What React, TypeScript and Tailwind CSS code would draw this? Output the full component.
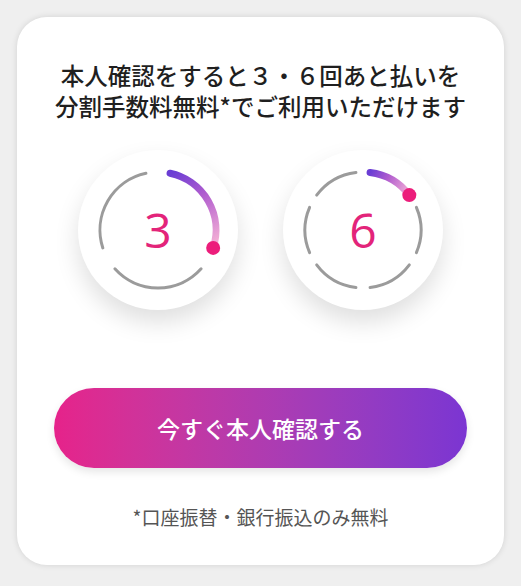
import React from 'react';

const JP = { fontFamily: '"Noto Sans CJK JP", "Noto Sans", sans-serif' };

// point on a ring, angle measured clockwise from 12 o'clock
function pt(cx: number, cy: number, r: number, deg: number) {
  const a = (deg * Math.PI) / 180;
  return { x: cx + r * Math.sin(a), y: cy - r * Math.cos(a) };
}

function arc(cx: number, cy: number, r: number, from: number, to: number) {
  const s = pt(cx, cy, r, from);
  const e = pt(cx, cy, r, to);
  const large = to - from > 180 ? 1 : 0;
  return `M ${s.x} ${s.y} A ${r} ${r} 0 ${large} 1 ${e.x} ${e.y}`;
}

function Dial({ count, id }: { count: number; id: string }) {
  const step = 360 / count;
  const gap = count === 3 ? 12 : 7;
  const segs = Array.from({ length: count }, (_, i) => ({
    from: i * step + gap,
    to: (i + 1) * step - gap,
  }));
  const c = 80;
  const r = 58;
  const first = segs[0];
  const s = pt(c, c, r, first.from);
  const e = pt(c, c, r, first.to);

  return (
    <div className="relative w-[160px] h-[160px] rounded-full bg-white shadow-[0_12px_24px_rgba(0,0,0,0.13)]">
      <svg width="160" height="160" viewBox="0 0 160 160" className="absolute inset-0">
        <defs>
          <linearGradient id={id} gradientUnits="userSpaceOnUse" x1={s.x} y1={s.y} x2={e.x} y2={e.y}>
            <stop offset="0" stopColor="#6a3dd4" />
            <stop offset="0.4" stopColor="#b05ccf" />
            <stop offset="1" stopColor="#f8b4d6" />
          </linearGradient>
        </defs>
        {segs.slice(1).map((sg, i) => (
          <path
            key={i}
            d={arc(c, c, r, sg.from, sg.to)}
            fill="none"
            stroke="#9b9b9b"
            strokeWidth="3"
            strokeLinecap="round"
          />
        ))}
        <path
          d={arc(c, c, r, first.from, first.to)}
          fill="none"
          stroke={`url(#${id})`}
          strokeWidth="7"
          strokeLinecap="round"
        />
        <circle cx={e.x} cy={e.y} r="7" fill="#ec1d7b" />
      </svg>
      <div
        className="absolute inset-0 flex items-center justify-center text-[48px] leading-none text-[#e3247a]"
        style={{ fontFamily: '"Open Sans", "Liberation Sans", sans-serif' }}
      >
        {count}
      </div>
    </div>
  );
}

export default function App() {
  return (
    <div className="w-[521px] h-[586px] bg-[#efefef] pt-[17px] pl-[17px]" style={JP}>
      <div className="w-[487px] h-[548px] rounded-[30px] bg-white shadow-[0_0_6px_rgba(0,0,0,0.12)] flex flex-col items-center pt-[43px]">
        <h1 className="text-center text-[23.5px] leading-[31px] font-medium text-[#1f1f1f]">
          本人確認をすると３・６回あと払いを
          <br />
          分割手数料無料*でご利用いただけます
        </h1>

        <div className="mt-[28px] flex gap-[45px]">
          <Dial count={3} id="g3" />
          <Dial count={6} id="g6" />
        </div>

        <button className="mt-[78px] w-[413px] h-[80px] rounded-full bg-gradient-to-r from-[#e6228a] to-[#7b35d2] text-white text-[23px] font-medium shadow-[0_4px_8px_rgba(0,0,0,0.1)]">
          今すぐ本人確認する
        </button>

        <p className="mt-[35px] text-[19px] leading-[27px] text-[#555]">*口座振替・銀行振込のみ無料</p>
      </div>
    </div>
  );
}
